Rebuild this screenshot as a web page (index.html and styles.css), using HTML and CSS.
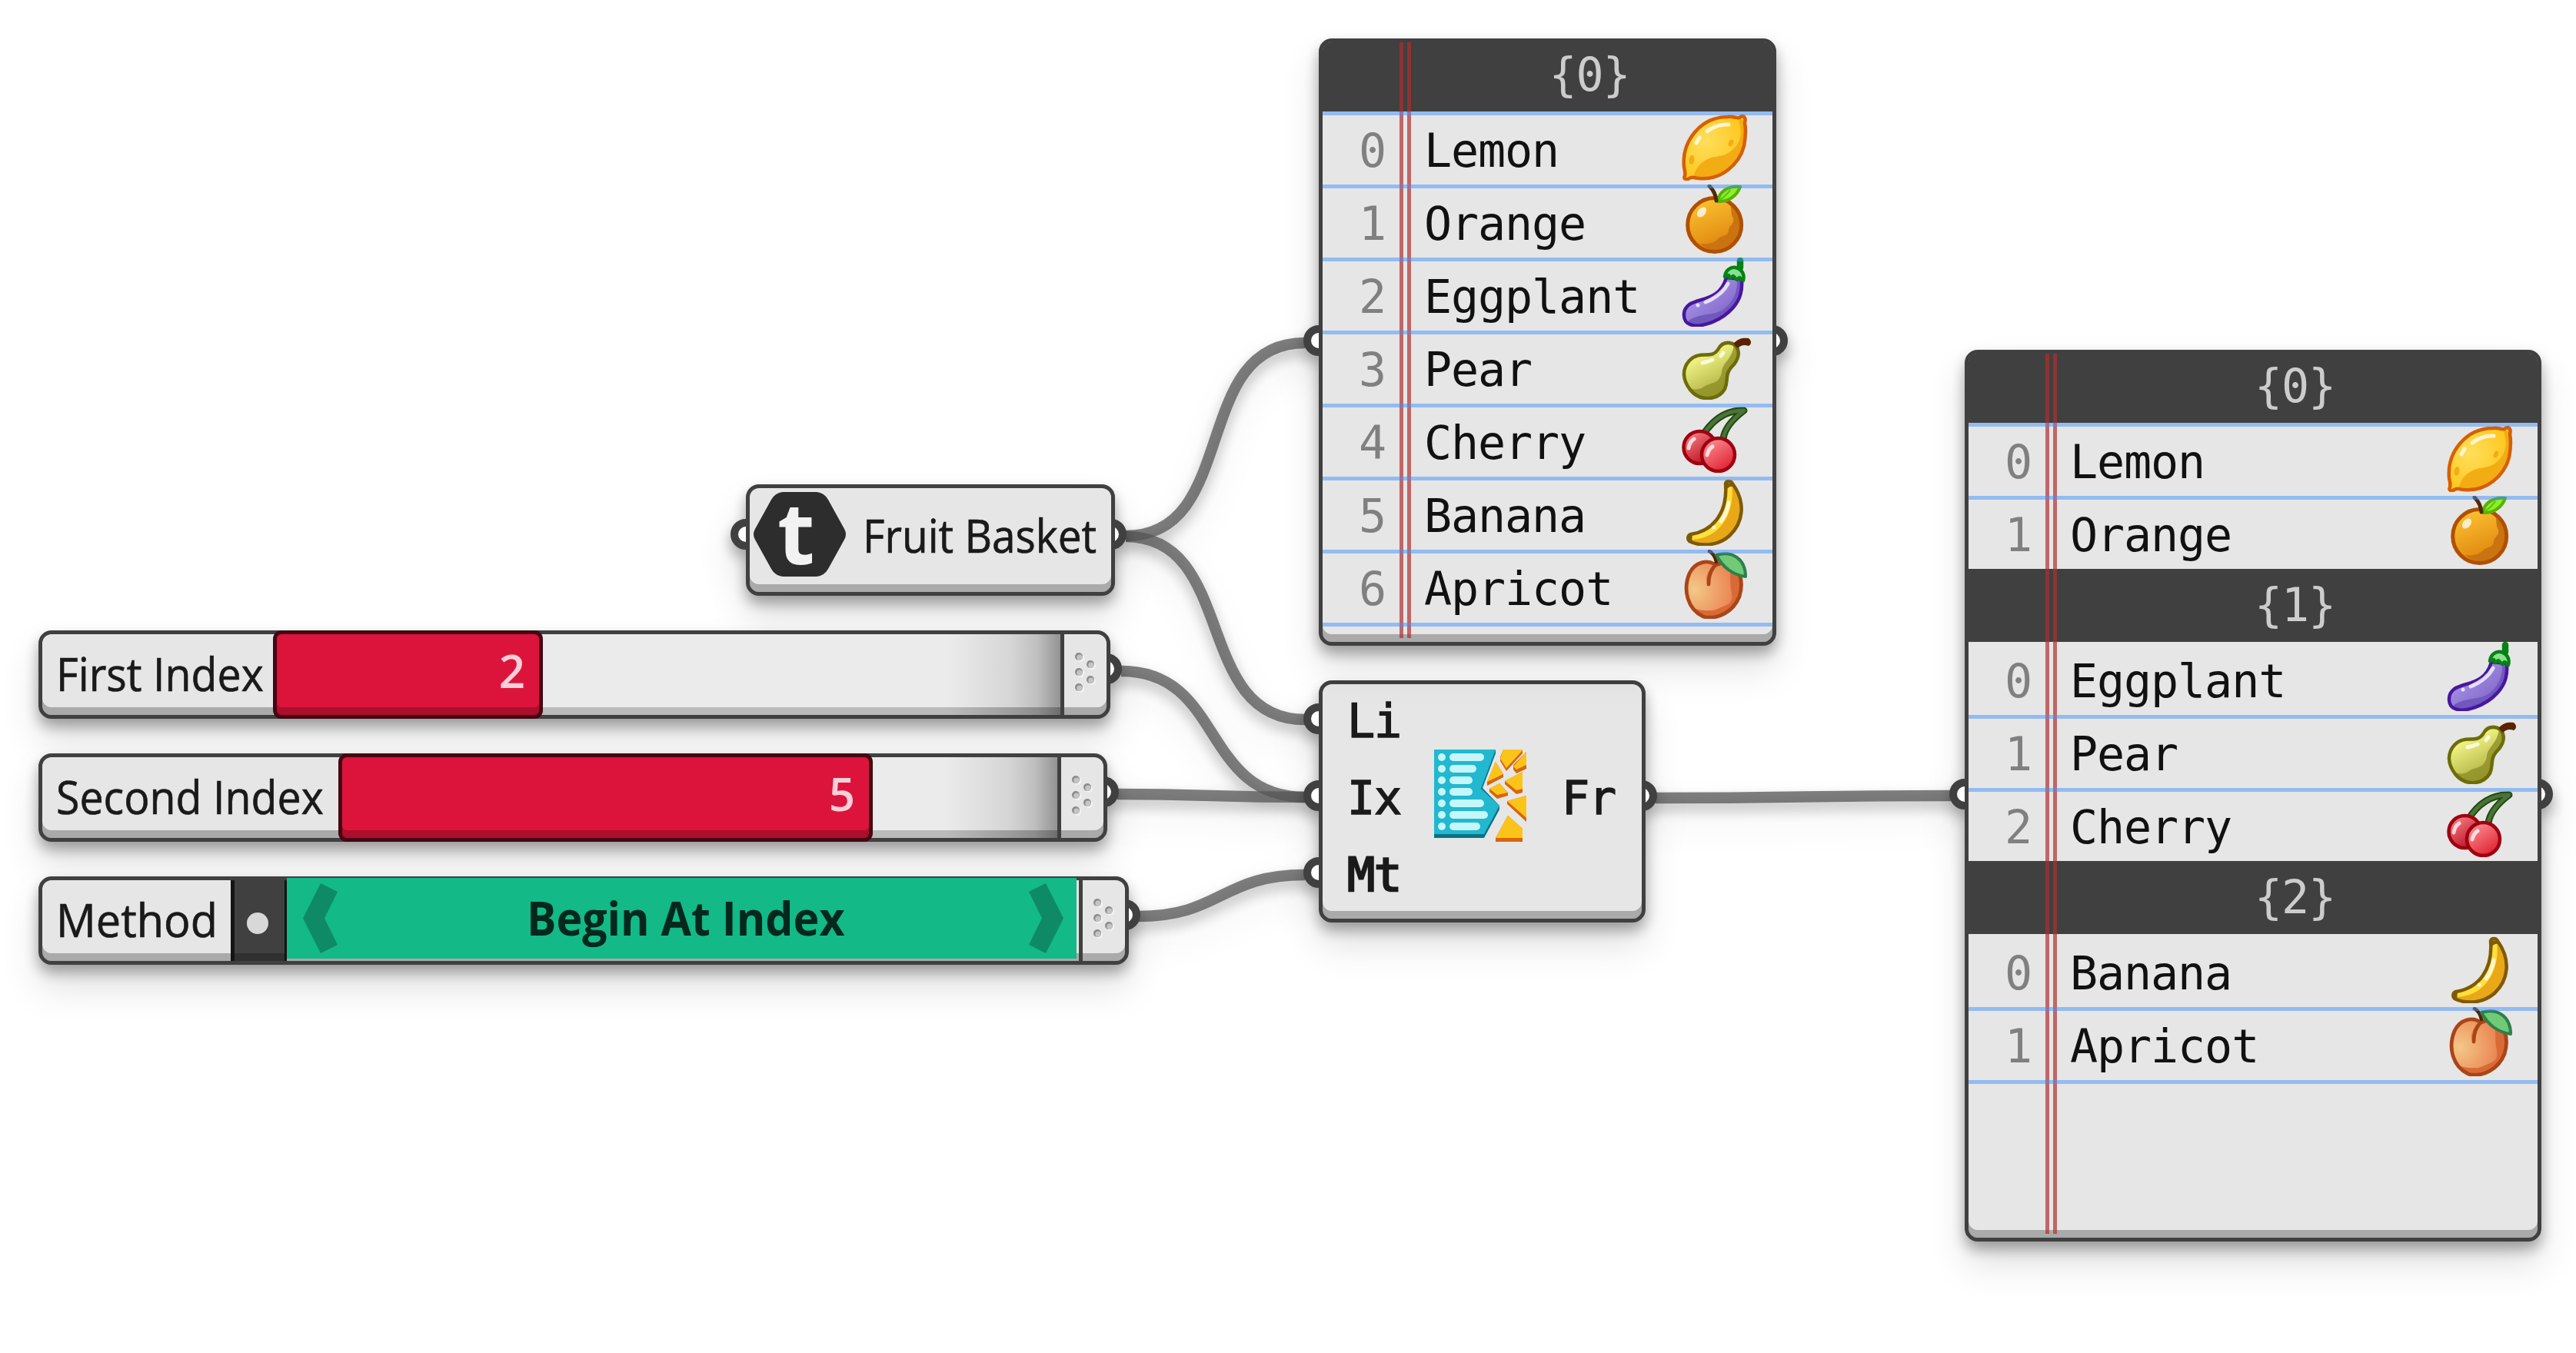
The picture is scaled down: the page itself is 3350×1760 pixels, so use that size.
FILE: index.html
```
<!DOCTYPE html>
<html lang="en">
<head>
	<meta charset="UTF-8">
	<meta name="viewport" content="width=device-width, initial-scale=1.0">
	<title>Fruit Basket</title>
	<link rel="stylesheet" href="styles.css">
</head>
<body>
	<!-- shared icons -->
	<svg class="defs" width="0" height="0">
		<defs>
			<radialGradient id="gLemon" cx=".35" cy=".4" r=".6"><stop offset="0" stop-color="#ffdf5c"/><stop offset="1" stop-color="#fdc822"/></radialGradient>
			<linearGradient id="gOrange" x1=".2" y1="0" x2=".6" y2="1"><stop offset="0" stop-color="#fcc534"/><stop offset="1" stop-color="#de800a"/></linearGradient>
			<linearGradient id="gEgg" x1=".1" y1=".3" x2=".8" y2="1"><stop offset="0" stop-color="#a996e6"/><stop offset="1" stop-color="#7a5ec4"/></linearGradient>
			<linearGradient id="gPear" x1=".2" y1=".2" x2=".6" y2="1"><stop offset="0" stop-color="#f8fa8c"/><stop offset="1" stop-color="#a5a638"/></linearGradient>
			<linearGradient id="gCherry" x1=".2" y1=".1" x2=".8" y2="1"><stop offset="0" stop-color="#f88a90"/><stop offset="1" stop-color="#e01c2c"/></linearGradient>
			<linearGradient id="gCherry2" x1=".2" y1=".1" x2=".8" y2="1"><stop offset="0" stop-color="#f07880"/><stop offset="1" stop-color="#b80818"/></linearGradient>
			<radialGradient id="gApricot" cx=".15" cy=".5" r=".75"><stop offset="0" stop-color="#f4c888"/><stop offset="1" stop-color="#ea8150"/></radialGradient>

			<symbol id="lemon" viewBox="0 0 90 90">
				<path fill="url(#gLemon)" d="M4 84C5 80 4 77 3 72C0 38 25 7 60 7C66 6 71 9 75 8C80 4 84 7 82 15C84 25 83 34 81 45C75 68 52 90 22 87C16 87 14 84 10 87C5 90 2 87 4 84Z"/>
				<path fill="#f2ac14" d="M15 86C20 68 28 65 36 61C46 57 55 60 66 50C80 38 78 22 73 9L82 12C84 24 83 34 81 45C75 68 52 89 22 87Z"/>
				<path fill="none" stroke="#d75f00" stroke-width="4.5" d="M4 84C5 80 4 77 3 72C0 38 25 7 60 7C66 6 71 9 75 8C80 4 84 7 82 15C84 25 83 34 81 45C75 68 52 90 22 87C16 87 14 84 10 87C5 90 2 87 4 84Z"/>
				<path class="shine" d="M33 26Q46 16 61 17M19 41L23 34"/>
				<ellipse fill="#f2ac14" cx="64" cy="41" rx="3" ry="4.6" transform="rotate(25 64 41)"/>
				<ellipse fill="#f2ac14" cx="13" cy="63" rx="3.4" ry="6" transform="rotate(8 13 63)"/>
			</symbol>
			<symbol id="orange" viewBox="0 0 90 90">
				<ellipse fill="url(#gOrange)" cx="42.7" cy="52.5" rx="35" ry="35"/>
				<path fill="#c97411" d="M62 23C66 32 63 38 67 44C69 52 60 54 61 61C59 68 52 66 48 70C42 76 37 78 24 77C37 90 58 89 70 75C82 59 80 34 62 23Z"/>
				<ellipse fill="none" stroke="#b05000" stroke-width="5" cx="42.7" cy="52.5" rx="35" ry="35"/>
				<path fill="#8cee2c" stroke="#59b100" stroke-width="4" stroke-linejoin="round" d="M47 22C48 10 60 1 76 3C72 15 60 23 47 22Z"/>
				<path fill="none" stroke="#55c010" stroke-width="2" d="M48 21Q58 15 63 7"/>
				<path fill="none" stroke="#4e2b00" stroke-width="5" stroke-linecap="round" d="M36 2Q44 10 45 21"/>
				<ellipse fill="#fff" opacity=".75" cx="26" cy="36" rx="5" ry="7.5" transform="rotate(40 26 36)"/>
			</symbol>
			<symbol id="eggplant" viewBox="0 0 90 90">
				<path fill="url(#gEgg)" d="M58 26C50 56 24 52 10 61C0 68 1 84 11 87C22 92 50 84 66 66C77 54 79 42 78 28Z"/>
				<path fill="#7058bd" d="M72 28C74 50 60 70 40 73C26 75 15 77 8 83C18 93 48 84 66 66C77 54 79 42 78 28Z"/>
				<path fill="none" stroke="#4717a0" stroke-width="4.5" d="M58 26C50 56 24 52 10 61C0 68 1 84 11 87C22 92 50 84 66 66C77 54 79 42 78 28Z"/>
				<path fill="#88e090" stroke="#058214" stroke-width="4.5" stroke-linejoin="round" d="M56 25C57 16 64 12 70 13C79 15 82 23 80 30L75 26L72 29L67 24L63 27L61 23Z"/>
				<path fill="none" stroke="#058214" stroke-width="8.5" stroke-linecap="round" d="M76 4V13"/>
				<path class="shine" d="M31 58Q52 49 60 34M21 62L21 62.1"/>
			</symbol>
			<symbol id="pear" viewBox="0 0 90 90">
				<path fill="url(#gPear)" d="M47 25C52 15 60 15 66 17C76 22 76 34 68 44C54 58 62 62 56 76C47 91 24 93 11 77C1 64 0 50 10 39C24 25 38 38 47 25Z"/>
				<path fill="#8d8e25" fill-opacity=".8" d="M68 18C66 38 52 42 52 55C48 71 37 67 29 73C20 79 14 76 8 74C22 94 47 91 56 76C62 62 54 58 68 44C76 34 76 23 68 18Z"/>
				<path fill="none" stroke="#6c6d09" stroke-width="4.5" d="M47 25C52 15 60 15 66 17C76 22 76 34 68 44C54 58 62 62 56 76C47 91 24 93 11 77C1 64 0 50 10 39C24 25 38 38 47 25Z"/>
				<path fill="#5b2200" d="M67 17C74 10 80 9 87 10C92 14 90 19 87 20C81 18 77 19 73 23Z"/>
				<path class="shine" d="M27 42Q33 41 40 38M51 33L54 29"/>
			</symbol>
			<symbol id="cherry" viewBox="0 0 90 90">
				<path fill="none" stroke="#1c4c08" stroke-width="9" stroke-linecap="round" stroke-linejoin="round" d="M27 42Q48 8 81 9Q56 28 54 46"/>
				<path fill="none" stroke="#4c713c" stroke-width="5" stroke-linecap="round" stroke-linejoin="round" d="M27 42Q48 8 81 9Q56 28 54 46"/>
				<ellipse fill="url(#gCherry2)" stroke="#9e0010" stroke-width="4.5" cx="23.5" cy="57" rx="21" ry="21"/>
				<ellipse fill="url(#gCherry)" stroke="#9e0010" stroke-width="4.5" cx="47.5" cy="66.5" rx="21.5" ry="21.5"/>
				<path class="shine" d="M9 58Q10 50 16 46M33 67Q35 59 40 56"/>
			</symbol>
			<symbol id="banana" viewBox="0 0 90 90">
				<path fill="#ffdf3d" d="M57 9C58 5 64 5 66 9C84 34 80 60 62 77C46 91 24 91 10 84C7 81 8 76 12 75C42 70 60 46 57 9Z"/>
				<path fill="#e9a817" d="M65 9C70 50 48 82 11 82C24 91 46 91 62 77C80 60 84 34 65 9Z"/>
				<path fill="none" stroke="#7f5a00" stroke-width="4.5" stroke-linejoin="round" d="M57 9C58 5 64 5 66 9C84 34 80 60 62 77C46 91 24 91 10 84C7 81 8 76 12 75C42 70 60 46 57 9Z"/>
				<path fill="#7f5a00" d="M56 8L66 9L67 13Q62 12 58 17ZM8 76L14 74L13 86L8 84Z"/>
				<path class="shine" d="M61 34Q59 47 51 58M42 66L42 66.1"/>
			</symbol>
			<symbol id="apricot" viewBox="0 0 90 90">
				<path fill="url(#gApricot)" d="M44 20C34 12 17 16 10 31C1 53 8 78 28 87C46 92 67 81 75 61C82 38 73 19 58 17C52 17 48 18 44 20Z"/>
				<path fill="#d96a36" d="M60 19C66 30 61 42 65 56C67 70 61 70 54 74C45 77 44 80 36 79C28 80 24 78 16 77C35 95 67 86 75 61C82 38 73 24 60 19Z"/>
				<path fill="#e47e3c" d="M42 21C33 28 29 37 34 46L38 30Z"/>
				<path fill="none" stroke="#aa4518" stroke-width="4.8" stroke-linecap="round" d="M35 45C35 35 37 27 44 20C34 12 17 16 10 31C1 53 8 78 28 87C46 92 67 81 75 61C82 38 73 19 58 17C52 17 48 18 44 20"/>
				<path fill="none" stroke="#532400" stroke-width="4.5" stroke-linecap="round" d="M36 2Q43 6 45 16"/>
				<path fill="#70ca78" stroke="#2e8049" stroke-width="4" stroke-linejoin="round" d="M45 7C66 1 83 12 83 35C67 33 53 23 45 7Z"/>
			</symbol>

			<symbol id="grip" viewBox="0 0 55 105">
				<g fill="#f4f4f4"><circle cx="21" cy="31" r="5"/><circle cx="36" cy="41" r="5"/><circle cx="21" cy="51" r="5"/><circle cx="36" cy="61" r="5"/><circle cx="21" cy="71" r="5"/></g>
				<g fill="#8c8c8c"><circle cx="19" cy="29" r="5"/><circle cx="34" cy="39" r="5"/><circle cx="19" cy="49" r="5"/><circle cx="34" cy="59" r="5"/><circle cx="19" cy="69" r="5"/></g>
				<g fill="#c4c4c4"><circle cx="20" cy="30.2" r="3.7"/><circle cx="35" cy="40.2" r="3.7"/><circle cx="20" cy="50.2" r="3.7"/><circle cx="35" cy="60.2" r="3.7"/><circle cx="20" cy="70.2" r="3.7"/></g>
			</symbol>
		</defs>
	</svg>

	<main class="canvas">
		<svg class="wires" viewBox="0 0 3350 1760">
			<path d="M1464 697C1613 697 1547 446 1697 446"/>
			<path d="M1464 698C1609 698 1551 936 1697 936"/>
			<path d="M1458 873C1592 873 1562 1037 1697 1037"/>
			<path d="M1453 1033C1575 1033 1575 1037 1697 1037"/>
			<path d="M1480 1192C1588 1192 1588 1138 1697 1138"/>
			<path d="M2153 1038C2345 1038 2345 1035 2537 1035"/>
		</svg>

		<section class="node basket">
			<i class="port in"></i><i class="port out"></i>
			<svg class="logo" viewBox="0 0 120 110">
				<path fill="#2d2d2d" d="M38 0H82Q92 1 97 10L118 48Q122 55 118 62L97 100Q92 109 82 110H38Q28 109 23 100L2 62Q-2 55 2 48L23 10Q28 1 38 0Z"/>
				<text x="31" y="94" class="logo-t">t</text>
			</svg>
			<span class="label">Fruit Basket</span>
		</section>

		<section class="node slider first">
			<i class="port out"></i>
			<div class="name"><span class="label">First Index</span></div>
			<div class="track"><div class="bar">2</div></div>
			<svg class="grip"><use href="#grip"/></svg>
		</section>

		<section class="node slider second">
			<i class="port out"></i>
			<div class="name"><span class="label">Second Index</span></div>
			<div class="track"><div class="bar">5</div></div>
			<svg class="grip"><use href="#grip"/></svg>
		</section>

		<section class="node slider method">
			<i class="port out"></i>
			<div class="name"><span class="label">Method</span></div>
			<div class="knob"><i></i></div>
			<div class="choice">
				<svg width="46" height="92" viewBox="0 0 46 92"><path d="M23 0L45 11L28 45.5L45 80L23 91L0 45.5Z"/></svg>
				<span>Begin At Index</span>
				<svg width="46" height="92" viewBox="0 0 46 92"><path d="M22 0L0 11L17 45.5L0 80L22 91L45 45.5Z"/></svg>
			</div>
			<svg class="grip"><use href="#grip"/></svg>
		</section>

		<section class="node component">
			<i class="port in p1"></i><i class="port in p2"></i><i class="port in p3"></i><i class="port out"></i>
			<div class="inputs"><span>Li</span><span>Ix</span><span class="strong">Mt</span></div>
			<svg class="glyph" viewBox="0 0 120 120">
				<path fill="#0b7285" d="M0 0H80V5L63 50L85 73V78L65 115H0Z"/>
				<path fill="#22b8cf" d="M0 0H80L61 51L85 73L65 110H0Z"/>
				<g fill="#c5f6fa">
					<circle cx="10" cy="10" r="5"/><rect x="20" y="5" width="45" height="10" rx="5"/>
					<circle cx="10" cy="25" r="5"/><rect x="20" y="20" width="35" height="10" rx="5"/>
					<circle cx="10" cy="40" r="5"/><rect x="20" y="35" width="30" height="10" rx="5"/>
					<circle cx="10" cy="55" r="5"/><rect x="20" y="50" width="30" height="10" rx="5"/>
					<circle cx="10" cy="70" r="5"/><rect x="20" y="65" width="45" height="10" rx="5"/>
					<circle cx="10" cy="85" r="5"/><rect x="20" y="80" width="50" height="10" rx="5"/>
					<circle cx="10" cy="100" r="5"/><rect x="20" y="95" width="40" height="10" rx="5"/>
				</g>
				<path fill="#d9640a" d="M90 0H115V5L94 28L86 15V10ZM120 3V25L107 31L103 26V20ZM80 16L90 32V36L69 47V42ZM115 29V56L107 58L92 45V41ZM85 44L96 56V60L82 64L72 55V51ZM120 60V94L95 71V67ZM96 86L115 103V120H80V115Z"/>
				<path fill="#fcc419" d="M90 0H115V1L94 24L86 12ZM120 3V20L107 26L103 22ZM80 16L90 32L69 42ZM115 29V51L107 53L92 41ZM85 44L96 56L82 59L72 51ZM120 60V89L95 67ZM96 86L115 103V115H80Z"/>
			</svg>
			<span class="output">Fr</span>
		</section>

		<section class="node panel list">
			<i class="port in"></i><i class="port out"></i>
			<div class="head"><span>{0}</span></div>
			<div class="row"><b>0</b><span>Lemon</span><svg><use href="#lemon"/></svg></div>
			<div class="row"><b>1</b><span>Orange</span><svg><use href="#orange"/></svg></div>
			<div class="row"><b>2</b><span>Eggplant</span><svg><use href="#eggplant"/></svg></div>
			<div class="row"><b>3</b><span>Pear</span><svg><use href="#pear"/></svg></div>
			<div class="row"><b>4</b><span>Cherry</span><svg><use href="#cherry"/></svg></div>
			<div class="row"><b>5</b><span>Banana</span><svg><use href="#banana"/></svg></div>
			<div class="row last"><b>6</b><span>Apricot</span><svg><use href="#apricot"/></svg></div>
		</section>

		<section class="node panel tree">
			<i class="port in"></i><i class="port out"></i>
			<div class="head"><span>{0}</span></div>
			<div class="row"><b>0</b><span>Lemon</span><svg><use href="#lemon"/></svg></div>
			<div class="row"><b>1</b><span>Orange</span><svg><use href="#orange"/></svg></div>
			<div class="head next"><span>{1}</span></div>
			<div class="row plain"><b>0</b><span>Eggplant</span><svg><use href="#eggplant"/></svg></div>
			<div class="row"><b>1</b><span>Pear</span><svg><use href="#pear"/></svg></div>
			<div class="row"><b>2</b><span>Cherry</span><svg><use href="#cherry"/></svg></div>
			<div class="head next"><span>{2}</span></div>
			<div class="row plain"><b>0</b><span>Banana</span><svg><use href="#banana"/></svg></div>
			<div class="row last"><b>1</b><span>Apricot</span><svg><use href="#apricot"/></svg></div>
		</section>
	</main>
</body>
</html>
```

FILE: styles.css
```
*,
*::before,
*::after{
	box-sizing:border-box;
}

body{
	margin:0;
	background:#fff;
	font-family:"Open Sans","Noto Sans",sans-serif;
	font-size:60px;
	color:#1a1a1a;
}

.defs{
	position:absolute;
}

.canvas{
	position:relative;
	width:3350px;
	height:1760px;
	overflow:hidden;
}

.wires{
	position:absolute;
	inset:0;
	width:100%;
	height:100%;
	filter:drop-shadow(0 9px 9px rgba(0,0,0,.34)) drop-shadow(0 22px 22px rgba(0,0,0,.08));
}

.wires path{
	fill:none;
	stroke:rgba(85,85,85,.75);
	stroke-width:14.5px;
}

.shine{
	fill:none;
	stroke:#fff;
	stroke-opacity:.75;
	stroke-width:5;
	stroke-linecap:round;
}

/* nodes */
.node{
	position:absolute;
	display:flex;
	background:#e6e6e6;
	border:5px solid #404040;
	border-radius:17px;
	box-shadow:inset 0 -10px 0 #aaa;
	filter:drop-shadow(0 10px 9px rgba(0,0,0,.32)) drop-shadow(0 26px 22px rgba(0,0,0,.12));
}

.port{
	position:absolute;
	width:40px;
	height:40px;
	border:10px solid #404040;
	border-radius:50%;
	background:#fff;
}

.port.in{
	left:-25px;
	clip-path:inset(0 20px 0 0);
}

.port.out{
	right:-20px;
	clip-path:inset(0 0 0 25px);
}

.label{
	display:inline-block;
	white-space:nowrap;
	transform:scaleX(.925);
	transform-origin:0 0;
	-webkit-text-stroke:.7px #1a1a1a;
}

.basket{
	left:970px;
	top:630px;
	width:480px;
	height:145px;
}

.basket .port{
	top:40px;
}

.logo{
	flex:none;
	width:120px;
	height:110px;
	margin:5px 0 0 5px;
}

.logo-t{
	font:bold 112px "Open Sans",sans-serif;
	fill:#f2f2f2;
}

.basket .label{
	margin-left:22px;
	line-height:122px;
	transform:scaleX(.917);
}

/* sliders */
.slider{
	left:50px;
	height:115px;
}

.slider .port{
	top:25px;
}

.first{
	top:820px;
	width:1394px;
}

.second{
	top:980px;
	width:1390px;
}

.method{
	top:1140px;
	width:1418px;
}

.name{
	flex:none;
	padding-left:18px;
	line-height:103px;
}

.first .name{
	width:300px;
}

.second .name{
	width:385px;
}

.method .name{
	width:245px;
}

.method .label{
	transform:scaleX(.96);
}

.track{
	flex:1;
	background:linear-gradient(90deg,rgba(255,255,255,.2) 0,rgba(255,255,255,.2) calc(100% - 145px),rgba(0,0,0,.07) calc(100% - 65px),rgba(0,0,0,.17) calc(100% - 30px),rgba(0,0,0,.36) 100%);
}

.bar{
	height:115px;
	margin-top:-5px;
	padding-right:18px;
	border:5px solid #450612;
	border-radius:11px;
	background:#dc143c;
	box-shadow:inset 0 -10px 0 #ab0f2b;
	color:#f8cfd8;
	font-weight:600;
	line-height:94px;
	text-align:right;
}

.first .bar{
	width:351px;
}

.second .bar{
	width:695px;
}

.grip{
	flex:none;
	width:60px;
	height:105px;
	border-left:5px solid #404040;
}

.knob{
	display:flex;
	flex:none;
	align-items:center;
	justify-content:center;
	width:73px;
	border:solid #141414;
	border-width:0 3px 0 5px;
	background:#404040;
	box-shadow:inset 0 -10px 0 #303030;
}

.knob i{
	width:28px;
	height:28px;
	margin:6px 5px 0 0;
	border-radius:50%;
	background:#d8d8d8;
}

.choice{
	display:flex;
	flex:1;
	align-items:center;
	justify-content:space-between;
	height:105px;
	margin:-3px 3px 0 0;
	padding:0 16px 0 21px;
	background:#13b986;
	color:#03281d;
	font-weight:bold;
	line-height:109px;
	white-space:nowrap;
}

.choice span{
	width:408px;
	transform:scaleX(.954);
	transform-origin:0 0;
}

.choice path{
	fill:#0f8a66;
}

/* component */
.component{
	left:1715px;
	top:885px;
	width:425px;
	height:315px;
	font-family:"DejaVu Sans Mono",monospace;
	letter-spacing:-1.1px;
	-webkit-text-stroke:1.5px #1a1a1a;
}

.component .port.p1{
	top:25px;
}

.component .port.p2,
.component .port.out{
	top:125px;
}

.component .port.p3{
	top:225px;
}

.inputs{
	display:flex;
	flex-direction:column;
	width:145px;
	margin-top:-5px;
	padding-left:32px;
}

.inputs span{
	height:100px;
	line-height:106px;
}

.inputs .strong{
	-webkit-text-stroke:2.5px #1a1a1a;
}

.glyph{
	width:120px;
	height:120px;
	margin-top:85px;
}

.output{
	margin:95px 0 0 46px;
	height:100px;
	line-height:106px;
}

/* panels */
.panel{
	flex-direction:column;
	font-family:"DejaVu Sans Mono",monospace;
	letter-spacing:-1.1px;
	color:#111;
}

/* double margin line */
.panel::before{
	content:"";
	position:absolute;
	left:100px;
	top:0;
	bottom:5px;
	z-index:1;
	width:15px;
	border:solid rgba(177,45,45,.69);
	border-width:0 5px;
}

.list{
	left:1715px;
	top:50px;
	width:595px;
	height:790px;
}

.list .port{
	top:368px;
}

.tree{
	left:2555px;
	top:455px;
	width:750px;
	height:1160px;
}

.tree .port{
	top:553px;
}

.head{
	height:90px;
	padding-left:109px;
	border-radius:11px 11px 0 0;
	background:#404040;
	color:#ccc;
	line-height:84px;
	text-align:center;
}

.head.next{
	height:95px;
	border-radius:0;
	line-height:94px;
}

.row{
	position:relative;
	display:flex;
	height:95px;
	line-height:103px;
}

.row::before,
.row.last::after{
	content:"";
	position:absolute;
	left:0;
	right:0;
	top:0;
	z-index:2;
	height:5px;
	background:rgba(64,144,250,.5);
}

.row.last::after{
	top:95px;
}

.row.plain::before{
	display:none;
}

.row b{
	width:82px;
	color:#808080;
	font-weight:normal;
	text-align:right;
}

.row span{
	flex:1;
	padding-left:50px;
}

.row svg{
	width:90px;
	height:90px;
	margin-right:28px;
}
```
